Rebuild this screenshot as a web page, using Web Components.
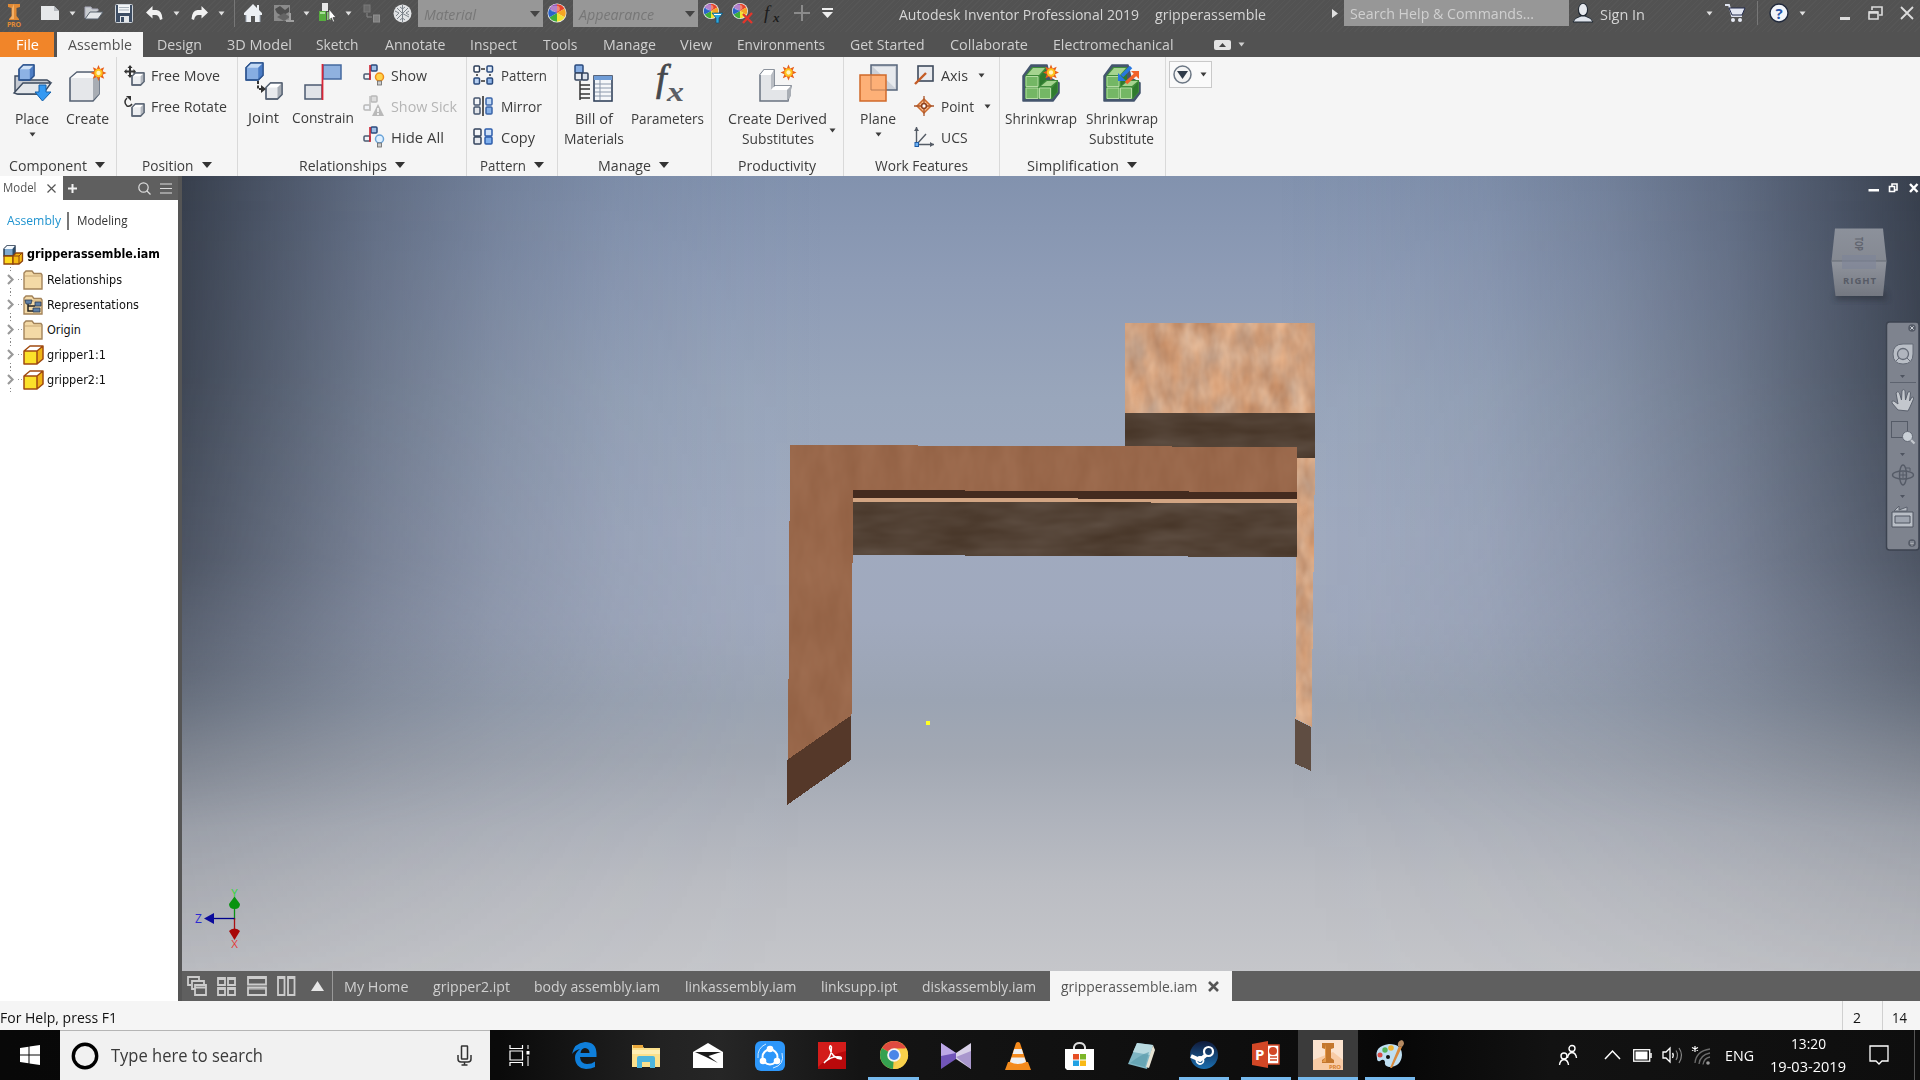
<!DOCTYPE html>
<html lang="en"><head><meta charset="utf-8"><title>Autodesk Inventor Professional 2019</title>
<style>html,body{margin:0;height:100%;overflow:hidden}body{font-family:"Open Sans","Noto Sans",sans-serif;font-size:15px}</style></head>
<body><inventor-desktop></inventor-desktop>
<script>
/* ---------- icon library: each entry is [width, height, markup] ---------- */
const cube=(x,y,s,f,t,r,k)=>`<path d="M${x} ${y+s*.28}L${x+s*.28} ${y}H${x+s}V${y+s*.72}L${x+s*.72} ${y+s}H${x}Z" fill="${f}" stroke="${k}" stroke-width="1.3" stroke-linejoin="round"/><path d="M${x} ${y+s*.28}L${x+s*.28} ${y}H${x+s}L${x+s*.72} ${y+s*.28}Z" fill="${t}"/><path d="M${x+s*.72} ${y+s*.28}L${x+s} ${y}V${y+s*.72}L${x+s*.72} ${y+s}Z" fill="${r}"/><path d="M${x} ${y+s*.28}L${x+s*.28} ${y}H${x+s}V${y+s*.72}L${x+s*.72} ${y+s}H${x}Z" fill="none" stroke="${k}" stroke-width="1.3" stroke-linejoin="round"/>`;
const spark=(x,y,r=7)=>{let p='';for(let i=0;i<16;i++){const a=i*Math.PI/8,q=i%2?r*.55:r;p+=(i?'L':'M')+(x+q*Math.cos(a)).toFixed(1)+' '+(y+q*Math.sin(a)).toFixed(1)}return `<path d="${p}Z" fill="#e8601a"/><circle cx="${x}" cy="${y}" r="${r*.52}" fill="#ffc21c"/><circle cx="${x}" cy="${y}" r="${r*.27}" fill="#fff6c0"/>`};
const ball=(x,y,r)=>{const c=['#e8452a','#f5a623','#f2e335','#3fae3a','#2b63c9','#8a3fb0'];let s=`<circle cx="${x}" cy="${y}" r="${r}" fill="#eee"/>`;for(let i=0;i<6;i++){const a=(i*60-90)*Math.PI/180,b=a+Math.PI/3;s+=`<path d="M${x} ${y}L${x+(r-.8)*Math.cos(a)} ${y+(r-.8)*Math.sin(a)}A${r-.8} ${r-.8} 0 0 1 ${x+(r-.8)*Math.cos(b)} ${y+(r-.8)*Math.sin(b)}Z" fill="${c[i]}"/>`}return s+`<ellipse cx="${x-r*.2}" cy="${y-r*.45}" rx="${r*.5}" ry="${r*.35}" fill="#fff" opacity=".35"/>`};
const sq=(x,y,w,h,f,k='#2a4a7c')=>`<rect x="${x}" y="${y}" width="${w}" height="${h}" rx="1" fill="${f}" stroke="${k}" stroke-width="1.5"/>`;
const relation=(f,k,l)=>`${sq(8,1,6,6,f,k)}${sq(1,10,6,5,'#f2f4f8',l)}<path d="M7 1V16" stroke="${k=='#b8b8b8'?'#c2c2c2':'#cf2233'}" stroke-width="1.6"/>`;
const shrink=`<path d="M1 12L9 1H25L28 14L37 19V29L31 37H1Z" fill="#44566e" stroke="#44566e" stroke-width="1.5" stroke-linejoin="round"/><path d="M3 12L10 3H24V16H36V28L30 35H3Z" fill="#3f8c3a"/><path d="M4 12.5H16V22.500H4ZM4 24H16V34.500H4ZM17.500 24H28.500V34.500H17.500Z" fill="#74b765" stroke="#b5dda3" stroke-width="1"/><path d="M5 11L11 4H23L17 11Z" fill="#a5d48f"/><path d="M18 12L24 5V16L18 22Z" fill="#2f7a2e"/><path d="M19 22L25 17H35L29 22Z" fill="#a5d48f"/><path d="M30 24L35 18V28L30 34Z" fill="#2f7a2e"/>`;
const folder='<path d="M1 5V3L3 1H9L11 3.5H18L19 5V19H1Z" fill="#f3d9a6" stroke="#a3835a" stroke-width="1.4"/><path d="M2 6H18" stroke="#c9a877" stroke-width="1"/>';
const part='<path d="M1 6L7 1H20L14 6V19H1Z" fill="#fbe12a"/><path d="M1 6L7 1H20L14 6Z" fill="#fff"/><path d="M14 6L20 1V14L14 19Z" fill="#f0b414"/><path d="M1 6L7 1H20V14L14 19H1ZM1 6H14M14 6V19M14 6L20 1" fill="none" stroke="#a04a10" stroke-width="1.5" stroke-linejoin="round"/>';
const I={
logo:[20,26,'<path d="M4 2H16V5L12.5 6V14L15 17V18H5V17L7.5 14V6L4 5Z" fill="#e08a35"/><path d="M8 6V14L6 17H10V2Z" fill="#f4b066"/><text x="10" y="25" font-size="7" font-weight="700" text-anchor="middle" textLength="14" fill="#e08a35" font-family="Open Sans,sans-serif">PRO</text>'],
newdoc:[20,16,'<path d="M1 1H14L19 6V15H1Z" fill="#e6e8ea"/><path d="M14 1V6H19Z" fill="#b6babf"/>'],
open:[20,14,'<path d="M1 12V1H7L8 3H14V5" fill="#c9cdd1" stroke="#aab" /><path d="M1 13L6 6H19L14 13Z" fill="#e3e6e9" stroke="#59636e"/>'],
save:[18,19,'<rect x=".5" y=".5" width="17" height="18" rx="1" fill="#3d4d63" stroke="#cfd4da"/><rect x="3" y="1" width="12" height="8" fill="#f2f4f6"/><path d="M4 3.5H14M4 6H14" stroke="#a9b2bb"/><rect x="5" y="12" width="9" height="6" fill="#e4e7ea"/><rect x="6" y="13" width="3" height="5" fill="#3d4d63"/>'],
undo:[17,14,'<path d="M6.500 0V4H10.500Q16 4.500 16.500 13L14 14Q13 9 9.500 9H6.500V12.500L0 6.500Z" fill="#f1f1f1"/>'],
redo:[17,14,'<path d="M10.500 0V4H6.500Q1 4.500 .5 13L3 14Q4 9 7.500 9H10.500V12.500L17 6.500Z" fill="#f1f1f1"/>'],
down:[7,5,'<path d="M.5 .5H6.5L3.5 4.5Z" fill="currentColor"/>'],
fdown:[10,6,'<path d="M0 0H10L5 6Z" fill="currentColor"/>'],
bigdown:[10,6,'<path d="M0 0H10L5 6Z" fill="currentColor"/>'],
right:[6,9,'<path d="M0 0L6 4.5L0 9Z" fill="#e0e0e0"/>'],
home:[18,18,'<path d="M9 0L0 9V11H2V18H7V12H11V18H16V11H18V9L15 6V1H13V4Z" fill="#eceff3"/><path d="M2 11V18M16 11V18" stroke="#9aa5b3"/>'],
update:[21,18,'<path d="M1 1H17V17H1Z" fill="#8a8a8a"/><path d="M2 5L7 2L12 6L16 3V8L9 12L4 9Z" fill="#4e4e4e"/><path d="M4 13L11 9L17 13L11 17Z" fill="#646464"/><path d="M17 9V16M13 17H21" stroke="#a0a0a0" stroke-width="2"/>'],
select:[18,20,'<path d="M4 0H10V8H4Z" fill="#e8e8e8"/><path d="M1 8H8V18H1Z" fill="#57ad3f"/><path d="M2 9H7V11H2Z" fill="#a9dd9a"/><path d="M9 9H13V17H9Z" fill="#8ac878"/><path d="M11 6V17L13.500 15L15 19L16.500 18.500L15 14.500H18Z" fill="#fff" stroke="#333" stroke-width=".6"/>'],
links:[18,20,'<rect x="1" y="2" width="6" height="7" fill="#6a6a6a" stroke="#7b7b7b"/><rect x="10.500" y="12" width="6" height="7" fill="#808080" stroke="#8f8f8f"/><path d="M4 10V14H9" fill="none" stroke="#888"/>'],
sphere:[19,19,'<circle cx="9.5" cy="9.5" r="9" fill="#e2e4e6"/><path d="M9.500 9.500L4 4M9.500 9.500L15 4M9.500 9.500L16 13M9.500 9.500L4 15M9.500 1V18M2 7L6 9L3 12M16 7L13 9L16 11M7 3L9.500 5L12 3M7 16L9.500 14L12 16" fill="none" stroke="#7d848b" stroke-width="1"/>'],
wheel:[20,20,ball(10,10,9.5)],
wheelf:[20,20,ball(8,8,8)+'<path d="M9 10H20L16 15V20H13V15Z" fill="#2ba8e0" stroke="#174a6a" stroke-width=".7"/><path d="M11 11.5H18" stroke="#fff"/>'],
wheelx:[22,20,ball(8,8,8)+'<path d="M11 11L20 20M20 10L11 20" stroke="#e3362c" stroke-width="2.400"/>'],
fxs:[18,19,'<text x="0" y="15" font-family="Liberation Serif,serif" font-style="italic" font-size="19" fill="#1c1c1c">f</text><text x="9" y="18" font-family="Liberation Serif,serif" font-style="italic" font-weight="700" font-size="13" fill="#1c1c1c">x</text>'],
plus:[18,18,'<path d="M9 1V17M1 9H17" stroke="#8b8b8b" stroke-width="2"/>'],
more:[11,10,'<path d="M0 1H11" stroke="#eee" stroke-width="2"/><path d="M0 4H11L5.5 10Z" fill="#eee"/>'],
user:[20,20,'<ellipse cx="10" cy="7" rx="5" ry="7" fill="#1f2833"/><ellipse cx="10" cy="6.5" rx="4" ry="5.8" fill="#e6e9ee"/><path d="M0 19Q1 15 8 13H12Q19 15 20 19Z" fill="#dfe4ec" stroke="#1f2833"/>'],
cart:[20,18,'<path d="M0 1H4L7 12H17" fill="none" stroke="#dfe3ee" stroke-width="1.8"/><path d="M4 4H20L17 11H7Z" fill="#e3e7f2" stroke="#232b4d"/><circle cx="8" cy="16" r="2" fill="#e8ebf5"/><circle cx="15" cy="16" r="2" fill="#e8ebf5"/>'],
help:[20,20,'<circle cx="10" cy="10" r="9" fill="#f2f5fa" stroke="#20293c" stroke-width="1.4"/><text x="10" y="15.5" text-anchor="middle" font-family="Open Sans,sans-serif" font-weight="700" font-size="15" fill="#2a56a8">?</text>'],
min:[10,3,'<path d="M0 0H10V3H0Z" fill="#dcdcdc"/>'],
restore:[15,14,'<path d="M4 4V1H14V9H11" fill="none" stroke="#dcdcdc" stroke-width="1.6"/><path d="M1 6H10V13H1Z" fill="none" stroke="#dcdcdc" stroke-width="1.6"/><path d="M1 6.5H10" stroke="#dcdcdc" stroke-width="2.5"/>'],
close:[14,14,'<path d="M1 1L13 13M13 1L1 13" stroke="#dcdcdc" stroke-width="1.800"/>'],
tabbox:[17,10,'<rect width="17" height="10" rx="2" fill="#e4e4e4"/><path d="M5 7L8.5 3L12 7Z" fill="#444"/>'],
place:[39,38,'<path d="M2 12H7L9 16H34L37 18L30 30H5L2 27Z" fill="#c5cad2" stroke="#3d4b5f" stroke-width="1.400"/><path d="M1 29L10 19H38L30 30H4Z" fill="#e3e6ea" stroke="#3d4b5f" stroke-width="1.400"/>'+cube(6,1,15,'#8db2e4','#cfe1f6','#4d7dc4','#2e5590')+'<path d="M26 21H33V28H38L29.500 37L22 28H26Z" fill="#3399f3" stroke="#1461a9"/>'],
create:[39,38,'<path d="M2 14L9 8H31V30L25 37H2Z" fill="#e5e7ea" stroke="#566273" stroke-width="1.600"/><path d="M3 14L9 9H30L25 14Z" fill="#fafafa"/><path d="M25 14L31 9V30L25 36Z" fill="#a8adb4"/>'+spark(30.5,9,8)],
fmove:[20,21,cube(8,8,12,'#eceef1','#fff','#b3b8bf','#5b6675')+'<path d="M6 0L8.500 3H7V5.500H9.500V4L12 6.500L9.500 9V7.500H7V10H8.500L6 13L3.500 10H5V7.500H2.500V9L0 6.500L2.500 4V5.500H5V3H3.500Z" fill="#333"/>'],
frot:[20,21,cube(8,8,12,'#eceef1','#fff','#b3b8bf','#5b6675')+'<path d="M3 2Q-1 6 3 10Q6 11 8 8" fill="none" stroke="#333" stroke-width="1.500"/><path d="M2 0H7V5Z" fill="#333"/>'],
joint:[38,39,cube(1,1,17,'#86ade2','#c3daf5','#4a7cc5','#2e5590')+cube(21,21,16,'#e8eaed','#fff','#a7adb5','#566273')+'<path d="M13 19V27H17" fill="none" stroke="#333" stroke-width="2" stroke-dasharray="3 1.500"/><path d="M16 23L21 27L16 31Z" fill="#333"/>'],
constrain:[38,37,'<rect x="19" y="1" width="18" height="14" fill="#8fb1df" stroke="#44699f" stroke-width="1.500"/><rect x="1" y="21" width="17" height="14" fill="#e0e3e8" stroke="#4b5a70" stroke-width="1.500"/><path d="M18.500 0V36" stroke="#d92637" stroke-width="1.800"/>'],
show:[21,22,relation('#9fbfe6','#2a4a7c','#4b5a70')+'<circle cx="16.500" cy="13" r="4" fill="#ffd34a" stroke="#ee8c1a" stroke-width="1.500"/><rect x="14.500" y="17" width="4" height="4" fill="#ccc" stroke="#666" stroke-width=".8"/>'],
sick:[21,22,relation('#ddd','#b8b8b8','#b8b8b8')+'<path d="M15 9L21 21H9Z" fill="#b9b9b9"/><path d="M15 13V17M15 18V20" stroke="#fff" stroke-width="1.500"/>'],
hide:[21,22,relation('#9fbfe6','#2a4a7c','#4b5a70')+'<circle cx="16.500" cy="13" r="4" fill="#dff0ff" stroke="#6aa3d8" stroke-width="1.500"/><rect x="14.500" y="17" width="4" height="4" fill="#ccc" stroke="#666" stroke-width=".8"/>'],
pattern:[21,20,sq(1,1,5.5,6,'#fff','#2b3c57')+sq(14,1,5.5,6,'#dbe8f9')+sq(1,13,5.5,6,'#b8d1f2')+sq(14,13,5.5,6,'#8fb5e8')+'<path d="M8 4H12M4 9V11M8 16H12M17 9V11" stroke="#333" stroke-width="1.500"/>'],
mirror:[21,20,sq(1,2,6,7,'#f4f6f9','#44546e')+sq(1,11,6,7,'#e2e5ea','#44546e')+sq(13,2,6,7,'#c0d8f5','#3a64a8')+sq(13,11,6,7,'#86b0e6','#3a64a8')+'<path d="M10 0V20" stroke="#222" stroke-width="1.500"/>'],
copy:[21,18,sq(1,1,7,7,'#f4f6f9','#33435c')+sq(1,9,7,7,'#e6e9ee','#33435c')+sq(12,1,7,7,'#cfe1f8','#2d5cab')+sq(12,9,7,7,'#7fb0ee','#2d5cab')],
bom:[39,38,sq(1,1,8,8,'#86ade2')+sq(1,9,7,7,'#e8ebf0','#33435c')+sq(8,9,6,7,'#dce3ec','#33435c')+'<path d="M6 17V36M6 21H16M6 25H16M6 30H16M6 34H16" stroke="#333" stroke-width="1.500"/><rect x="20" y="12" width="18" height="25" fill="#f5f7fa" stroke="#33435c" stroke-width="1.600"/><path d="M20 12H38V16H20Z" fill="#6f9cd6"/><path d="M26 16V36M21 20H37M21 24H37M21 28H37M21 32H37" stroke="#8b98ab"/>'],
fx:[34,38,'<text x="5" y="27" font-family="Liberation Serif,serif" font-style="italic" font-size="38" fill="#45484d" stroke="#45484d" stroke-width=".7">f</text><text x="16" y="37" font-family="Liberation Serif,serif" font-style="italic" font-weight="700" font-size="27" textLength="17" lengthAdjust="spacingAndGlyphs" fill="#5b5f66">x</text>'],
derived:[39,38,'<path d="M2 11L6 6H16V22H33L30 37H2Z" fill="#e3e5e8" stroke="#6a7380" stroke-width="1.500"/><path d="M2 11L6 6H16L13 11Z" fill="#fff"/><path d="M13 11L16 6V22L13 26Z" fill="#b9bdc3"/><path d="M13 26L17 22H33L29 26Z" fill="#fff"/><path d="M29 26L33 22V32L29 37Z" fill="#a9aeb5"/>'+spark(30.5,8.5,8)],
plane:[39,38,'<rect x="12" y="1" width="26" height="25" fill="#cbd0d8" stroke="#56647a" stroke-width="1.500"/><path d="M14 3H36V24Z" fill="#e6e9ed"/><rect x="1" y="11" width="26" height="26" fill="#fdb077" stroke="#d0692a" stroke-width="1.500"/><path d="M12 11V26H27" fill="none" stroke="#b87b55"/>'],
axis:[20,20,'<rect x="4" y="1" width="15" height="15" fill="#e9ebef" stroke="#3e4a5c" stroke-width="1.600"/><path d="M1 19L12 8" stroke="#c45c26" stroke-width="2.400"/>'],
point:[20,20,'<path d="M10 3L17 10L10 17L3 10Z" fill="#fcc08f" stroke="#cc6a2c" stroke-width="1.500"/><path d="M10 0V7M10 13V20M0 10H7M13 10H20" stroke="#a8542a" stroke-width="1.300"/><circle cx="10" cy="10" r="2.400" fill="#fff" stroke="#8d3f1b" stroke-width="1.500"/>'],
ucs:[20,20,'<path d="M2.500 0V17.500H20M3 17L12 7" fill="none" stroke="#555c66" stroke-width="1.400"/><path d="M0 4L2.500 0L5 4ZM16 15L20 17.500L16 20Z" fill="#555c66"/><rect x="1" y="15.500" width="3.500" height="4" fill="#6cb2f5" stroke="#1e5ca5"/>'],
shrink:[38,38,shrink+spark(29,8.5,8)],
subst:[38,38,shrink+'<path d="M28 3L19 12" stroke="#2878e0" stroke-width="3.500"/><path d="M15 9V17H23Z" fill="#2878e0"/><path d="M23 19L33 10" stroke="#f2622a" stroke-width="3.500"/><path d="M28 7H36V15Z" fill="#f2622a"/>'],
ribmenu:[19,19,'<circle cx="9.500" cy="9.500" r="8.500" fill="#f4f4f4" stroke="#6b7683" stroke-width="1.500"/><path d="M4 6H15L9.500 14Z" fill="#2f3a48"/>'],
x:[9,9,'<path d="M.5 .5L8.500 8.500M8.500 .5L.5 8.500" stroke="#555" stroke-width="1.200"/>'],
add:[9,9,'<path d="M4.500 0V9M0 4.500H9" stroke="#f2f2f2" stroke-width="2"/>'],
search:[13,13,'<circle cx="5.500" cy="5.500" r="4.700" fill="none" stroke="#ddd" stroke-width="1.200"/><path d="M9 9L12.500 12.500" stroke="#ddd" stroke-width="1.300"/>'],
menu:[12,11,'<path d="M0 1H12M0 5.500H12M0 10H12" stroke="#ddd" stroke-width="1.200"/>'],
asm:[20,20,'<path d="M1 4L4 1H12V9L10 11H1Z" fill="#7fa9cf" stroke="#1d2f45" stroke-width="1.400"/><path d="M1 4L4 1H12L9.500 4Z" fill="#f5faff"/><path d="M9.500 4L12 1V9L9.500 11Z" fill="#2d4a68"/><path d="M1 11H10V19H1Z" fill="#ffd91e" stroke="#8f430d" stroke-width="1.300"/><path d="M10 11L13 8H19.500V16L16 19H10Z" fill="#f5b913" stroke="#8f430d" stroke-width="1.300"/><path d="M10 11H16V19M16 11L19 8" fill="none" stroke="#8f430d"/>'],
folder:[20,20,folder],
reps:[20,20,folder+'<path d="M5 8V16H10M5 11H12" fill="none" stroke="#222" stroke-width="1.500"/><path d="M2 5H9L8 9H3ZM12 7H18V11H12ZM10 13H17V17H10Z" fill="#5e7fa5" stroke="#2b3b50" stroke-width=".8"/>'],
part:[20,20,part],
chev:[7,11,'<path d="M1 1L5.500 5.500L1 10" fill="none" stroke="#999" stroke-width="2.200"/>'],
cascade:[20,20,'<path d="M12 4V1H1V9H4M17 8V5H5V13H8M8 9H19V19H8ZM8 11.500H19" fill="none" stroke="#ccc" stroke-width="1.800"/>'],
grid:[19,19,'<path d="M1 1H8V8H1ZM11 1H18V8H11ZM1 11H8V18H1ZM11 11H18V18H11Z" fill="none" stroke="#ccc" stroke-width="1.800"/><path d="M1 2.500H8M11 2.500H18M1 12.500H8M11 12.500H18" stroke="#ccc"/>'],
rows:[20,20,'<path d="M1 1H19V8.500H1ZM1 11.500H19V19H1Z" fill="none" stroke="#ccc" stroke-width="1.800"/><path d="M1 2.500H19M1 13H19" stroke="#ccc"/>'],
cols:[19,20,'<path d="M1 1H7.500V19H1ZM11 1H17.500V19H11Z" fill="none" stroke="#ccc" stroke-width="1.800"/><path d="M1 2.500H8M11 2.500H18" stroke="#ccc"/>'],
up:[13,10,'<path d="M0 10L6.500 0L13 10Z" fill="#e6e6e6"/>'],
docx:[11,11,'<path d="M1 1L10 10M10 1L1 10" stroke="#555" stroke-width="2.600"/>'],
win:[20,20,'<path d="M0 3L8.500 1.800V9.500H0ZM9.500 1.600L20 0V9.500H9.500ZM0 10.500H8.500V18.200L0 17ZM9.500 10.500H20V20L9.500 18.400Z" fill="#fff"/>'],
cortana:[28,28,'<circle cx="14" cy="14" r="11.700" fill="none" stroke="#000" stroke-width="3.400"/>'],
mic:[15,21,'<rect x="4.500" y="1" width="6" height="13" rx=".5" fill="none" stroke="#333" stroke-width="1.500"/><path d="M1 10V14Q1 17 4 17H11Q14 17 14 14V10M7.500 17V20M4.500 20H10.500" fill="none" stroke="#333" stroke-width="1.500"/>'],
taskview:[21,21,'<path d="M1 0V3.500H13.500V0M1 21V17.500H13.500V21M1 6H13.500V15H1Z" fill="none" stroke="#fff" stroke-width="1.200"/><path d="M19 0V4M19 11V21" stroke="#fff" stroke-width="1"/><path d="M17.500 6H20.500V9.500H17.500Z" fill="#fff"/>'],
edge:[25,27,'<path d="M0 12Q2 1 13 0Q24 0 24.500 11V15H8Q8.500 22 15 22Q20 22 23 19.500V25Q19 27 14 27Q3 26 3 15Q3 11 8 7Q3 8 0 12ZM8.500 11H17.500Q17.500 6.500 13 6Q9 6.500 8.500 11Z" fill="#0f7fdb" fill-rule="evenodd"/>'],
explorer:[28,24,'<path d="M0 1H10L12 4H28V23H0Z" fill="#fbe08c"/><path d="M1 1H11V4H1Z" fill="#e9a83c"/><path d="M0 6H28V10H0Z" fill="#fdeeb4"/><path d="M5 24V14Q5 12 7 12H21Q23 12 23 14V24H18V18H10V24Z" fill="#4db5dc"/>'],
mail:[30,25,'<path d="M0 9L15 0L30 9V25H0Z" fill="#fff"/><path d="M2 9H28L15.500 13L25 20L12 13.500Z" fill="#1a1a1a"/>'],
share:[30,30,'<rect width="30" height="30" rx="6" fill="#2d97fa"/><circle cx="15" cy="16" r="7.500" fill="none" stroke="#fff" stroke-width="2"/><g fill="#fff"><circle cx="15" cy="8" r="3.300"/><circle cx="8" cy="20" r="3.300"/><circle cx="22" cy="20" r="3.300"/></g><path d="M3 17Q2 7 11 3M27 12Q30 24 18 27" fill="none" stroke="#cfe8ff"/>'],
pdf:[28,27,'<rect width="28" height="27" fill="#b9090b"/><path d="M0 0H28V9Q12 12 0 25Z" fill="#d31c1a"/><path d="M6 21Q14 15 13.500 5Q12 2 11.500 6Q14 16 23 17Q25 14 16 15Q9 17 6 21Z" fill="none" stroke="#fff" stroke-width="1.400"/>'],
chrome:[28,28,'<circle cx="14" cy="14" r="14" fill="#f6c945"/><path d="M14 14L1.900 7A14 14 0 0 1 26.100 7Z" fill="#e04a3f"/><path d="M14 14L1.900 7A14 14 0 0 0 13 28Z" fill="#35a150"/><path d="M14 7.500H26.400A14 14 0 0 1 13 28L20 17.500Z" fill="#f9d14b"/><circle cx="14" cy="14" r="6.800" fill="#f4f4f4"/><circle cx="14" cy="14" r="5" fill="#4b86e8"/>'],
kmp:[30,26,'<path d="M0 0L15 10V16L0 26Z" fill="#7155b8"/><path d="M0 0L15 10L0 13Z" fill="#bda8e6"/><path d="M30 0L15 10V16L30 26Z" fill="#d9d1e8"/><path d="M30 8L15 14L30 26Z" fill="#a997cd"/>'],
vlc:[26,28,'<path d="M3 20H23L26 28H0Z" fill="#f28a1c"/><path d="M11 1Q13-1 15 1L22 22Q13 27 4 22Z" fill="#f58a1c"/><path d="M9.200 7H16.800L18.300 12H7.700ZM6.500 15.500H19.500L21 20Q13 24 5 20Z" fill="#eef0f2"/>'],
store:[29,28,'<path d="M9 10V5Q10 1 14.500 1Q19 1 20 5V10" fill="none" stroke="#ddd" stroke-width="2"/><path d="M0 7H29V28H2L0 26Z" fill="#fff"/><path d="M8 12H14V17.500H8Z" fill="#e74f25"/><path d="M15 12H21V17.500H15Z" fill="#7cb629"/><path d="M8 18.500H14V24H8Z" fill="#22a2e4"/><path d="M15 18.500H21V24H15Z" fill="#f9b916"/>'],
note:[27,27,'<path d="M9 1L25 3L19 27L0 22Z" fill="#7fb6c4"/><path d="M9 1L25 3L22 13L5 10Z" fill="#b9dae0"/><path d="M25 3L27 8L21 26L18 25Z" fill="#e6e2d3"/><path d="M2 21Q12 13 21 10L17 25Z" fill="#5d9eae" opacity=".7"/>'],
steam:[28,28,'<defs><linearGradient id="g" x2="0" y2="1"><stop stop-color="#101a3a"/><stop offset="1" stop-color="#1b6fb0"/></linearGradient></defs><circle cx="14" cy="14" r="14" fill="url(#g)"/><circle cx="18.500" cy="10.500" r="4.500" fill="none" stroke="#fff" stroke-width="2.200"/><path d="M1 15L10 19L16 14" fill="none" stroke="#fff" stroke-width="4"/><circle cx="10" cy="19.500" r="3.500" fill="none" stroke="#fff" stroke-width="1.800"/>'],
ppt:[28,27,'<path d="M13 4H27V23H13Z" fill="#fff" stroke="#d24726" stroke-width="1.500"/><path d="M0 3L16 0V27L0 24Z" fill="#d24726"/><path d="M18 16H25M18 19H25" stroke="#d24726" stroke-width="1.500"/><circle cx="21" cy="10" r="4" fill="#d24726"/><text x="3" y="19" font-family="Open Sans,sans-serif" font-weight="700" font-size="15" fill="#fff">P</text>'],
inv:[30,30,'<rect width="30" height="30" fill="#fbe3cf"/><path d="M0 20L20 12L30 20V30H0Z" fill="#f8cba5"/><path d="M9 3H21V8L18 9V18L21 20V23H9V20L12 18V9L9 8Z" fill="#c4772d"/><path d="M13 4V22H9L12 18V9Z" fill="#e59a4c"/><text x="16" y="28.500" textLength="12" font-size="6" font-weight="700" font-family="Open Sans,sans-serif" fill="#d9812f">PRO</text>'],
paint:[30,29,'<path d="M2 18Q-1 6 14 4Q27 4 27 15Q26 27 14 27Q9 26 10 22Q9 18 5 21Q2 22 2 18Z" fill="#bfdff2"/><circle cx="5" cy="15" r="2.500" fill="#d94b45"/><circle cx="10" cy="10" r="2.700" fill="#56b35a"/><circle cx="16" cy="8" r="2.800" fill="#f0b432"/><circle cx="13" cy="17" r="2" fill="#111"/><path d="M15 28L24 6L27 7L17 28Z" fill="#d98a3d"/><path d="M23 6Q22 1 27 0Q31 3 27 7Z" fill="#b58a62"/>'],
people:[18,20,'<circle cx="13" cy="3.500" r="3" fill="none" stroke="#fff" stroke-width="1.400"/><path d="M8.500 13Q9 8 13 7.500Q17 8 17.500 13" fill="none" stroke="#fff" stroke-width="1.400"/><circle cx="5" cy="11" r="3" fill="none" stroke="#fff" stroke-width="1.400"/><path d="M.5 20Q1 15 5 14.500Q9 15 9.500 20" fill="none" stroke="#fff" stroke-width="1.400"/>'],
caret:[17,10,'<path d="M1 9L8.500 1L16 9" fill="none" stroke="#fff" stroke-width="1.500"/>'],
battery:[19,13,'<rect x=".7" y=".7" width="16" height="11.500" fill="none" stroke="#fff" stroke-width="1.300"/><rect x="2.500" y="2.500" width="12" height="8" fill="#fff"/><path d="M18 4V9" stroke="#fff" stroke-width="1.500"/>'],
vol:[21,17,'<path d="M1 5H4L8 1V15L4 11H1Z" fill="none" stroke="#fff" stroke-width="1.300"/><path d="M10.500 6Q12 8 10.500 11" fill="none" stroke="#fff" stroke-width="1.300"/><path d="M14 3.500Q17 8 14 13M17 1Q22 8 17 16" fill="none" stroke="#888" stroke-width="1.200"/>'],
wifi:[19,19,'<path d="M3 0V6M0 1.500L6 4.500M6 1.500L0 4.500" stroke="#fff" stroke-width="1.200"/><path d="M3 17Q4 5 18 3M7 18Q8 9 18 7M11 18.500Q12 12 18 11" fill="none" stroke="#6c6c6c" stroke-width="1.300"/><circle cx="16" cy="17" r="1.800" fill="#999"/>'],
action:[20,21,'<path d="M1 1H19V16H13L10 19L7 16H1Z" fill="none" stroke="#fff" stroke-width="1.300"/>']
};
/* ---------- helpers ---------- */
const ic=n=>`<ui-icon name="${n}"></ui-icon>`;
const tx=(s,w,st='')=>`<fit-label w="${w}" style="${st}">${s}</fit-label>`;
/* Flow row: each item is [left edge, width, markup, style]; the gap to the previous item becomes its margin. */
const row=(o,items)=>{let p=o;return items.map(([x,w,h,s=''])=>{const m=x-p;p=x+w;return `<div class="i" style="margin-left:${m.toFixed(2)}px;width:${w}px;${s}">${h}</div>`}).join('')};
const T=(x,e,s,st='')=>[x,e-x,tx(s,e-x),st];
const N=(x,n,st='')=>[x,I[n][0],ic(n),st];
const rowCss='.row{display:flex;align-items:center}.i{flex:none}';
const def=(name,css,html)=>customElements.define(name,class extends HTMLElement{connectedCallback(){if(this.shadowRoot)return;this.attachShadow({mode:'open'}).innerHTML=`<style>:host{display:block;box-sizing:border-box}${rowCss}${css}</style>${typeof html=='function'?html(this):html}`}});

customElements.define('fit-label',class extends HTMLElement{connectedCallback(){if(this.shadowRoot)return;const w=+this.getAttribute('w');
this.attachShadow({mode:'open'}).innerHTML=`<style>:host{display:block;width:${w}px;line-height:20px;white-space:nowrap}span{display:inline-block;transform-origin:0 50%}</style><span><slot></slot></span>`;
const s=this.shadowRoot.querySelector('span');const n=s.getBoundingClientRect().width;if(n)s.style.transform=`scaleX(${w/n})`}});
customElements.define('ui-icon',class extends HTMLElement{connectedCallback(){if(this.shadowRoot)return;const[w,h,b]=I[this.getAttribute('name')];
this.attachShadow({mode:'open'}).innerHTML=`<style>:host{display:block;width:${w}px;height:${h}px}svg{display:block;overflow:visible}</style><svg width="${w}" height="${h}" viewBox="0 0 ${w} ${h}">${b}</svg>`}});

def('title-bar',`:host{height:32px;background:repeating-linear-gradient(135deg,rgba(255,255,255,.025) 0 1px,transparent 1px 4px),#525252;color:#d6d6d6}.row{height:26px}.field{background:#979797;height:27px;box-sizing:border-box;padding:1px 3px 0 6px;display:flex;align-items:center;justify-content:space-between;color:#777}.field fit-label{font-style:italic}.i ui-icon{color:#e0e0e0}.i .field ui-icon{color:#444}`,
`<div class="row">${row(0,[N(4,'logo','padding-top:4px'),N(39.5,'newdoc'),N(68.5,'down'),N(84,'open'),N(115,'save'),N(146,'undo'),N(172.5,'down'),N(191,'redo'),N(217.5,'down'),[234,1,'<div style="height:27px;background:#777"></div>'],N(244,'home'),N(273,'update'),N(302.5,'down'),N(318,'select'),N(344.5,'down'),N(363,'links'),N(392.5,'sphere'),
[418,125,`<div class="field">${tx('Material',52)}${ic('fdown')}</div>`],N(546.5,'wheel'),[573,125,`<div class="field">${tx('Appearance',75)}${ic('fdown')}</div>`],N(703,'wheelf'),N(732,'wheelx'),N(764,'fxs'),N(793,'plus'),N(821.5,'more'),
T(899,1139,'Autodesk Inventor Professional 2019','padding-top:2px'),T(1155,1266,'gripperassemble','padding-top:2px'),N(1332,'right'),
[1344,225,`<div class="field" style="height:26px;color:#d0d0d0;padding-bottom:1px;padding-top:0"><fit-label w="184" style="font-style:normal">Search Help &amp; Commands...</fit-label></div>`],N(1573,'user'),T(1600,1645,'Sign In','padding-top:1px'),N(1705.5,'down'),N(1725,'cart'),[1757,1,'<div style="height:24px;background:#777"></div>'],N(1769,'help'),N(1798.5,'down'),N(1840,'min','padding-top:11px'),N(1868,'restore'),N(1900,'close')])}</div>`);

def('ribbon-tabs',`:host{height:25px;background:#525252;color:#cfcfcf}.row{height:25px;align-items:stretch}.i{display:flex;align-items:center}.i fit-label{padding-bottom:1.500px}.file{background:#f18529;width:54px;height:25px;color:#fff}.act{background:#f5f5f5;height:25px;width:86px;color:#505050}.c{display:flex;align-items:center;justify-content:center}`,
`<div class="row">${row(0,[[0,54,`<div class="file c">${tx('File',23)}</div>`],[57,86,`<div class="act c">${tx('Assemble',64)}</div>`],T(157,202,'Design'),T(226.5,291.5,'3D Model'),T(316,358.5,'Sketch'),T(384.5,445,'Annotate'),T(470,517,'Inspect'),T(542.5,577,'Tools'),T(602.5,655.5,'Manage'),T(680,712,'View'),T(737,825,'Environments'),T(850,924.5,'Get Started'),T(950,1028,'Collaborate'),T(1052.5,1173,'Electromechanical'),N(1214,'tabbox'),N(1237.5,'down')])}</div>`);

def('big-button',`.col{display:flex;flex-direction:column;align-items:center}ui-icon{margin-bottom:6px}ui-icon.d{margin:4px 0 0}`,
h=>{const L=h.getAttribute('lines').split('|').map(v=>v.split('~'));return `<div class="col">${ic(h.getAttribute('icon'))}${L.map(l=>tx(l[0],+l[1])).join('')}${h.hasAttribute('menu')?'<ui-icon class="d" name="down"></ui-icon>':''}</div>`});
def('small-button',`.row{height:31px}.row ui-icon{margin-right:7px}.row ui-icon.d{margin:0 0 0 10px}`,
h=>`<div class="row">${ic(h.getAttribute('icon'))}${tx(h.getAttribute('text'),+h.getAttribute('w'))}${h.hasAttribute('menu')?'<ui-icon class="d" name="down"></ui-icon>':''}</div>`);
const big=(x,w,i,l,m='',pt=7)=>[x,w,`<big-button icon="${i}" lines="${l}" ${m}></big-button>`,`padding-top:${pt}px`];
const small=(x,w,a)=>[x,w,a.map(([i,t,tw,m='',s=''])=>`<small-button icon="${i}" text="${t}" w="${tw}" ${m} style="${s}"></small-button>`).join(''),'padding-top:2.500px'];
def('ribbon-panel',`:host{flex:none;border-right:1px solid #d9d9d9;display:flex;flex-direction:column;height:119px;color:#3c3c3c}.body{display:flex;height:98px;align-items:flex-start}.foot{display:flex;align-items:center;height:22px}.foot ui-icon{color:#333;margin-left:8px}.box{box-sizing:border-box;width:43px;height:27px;border:1px solid #c9c9c9;background:#fafafa;display:flex;align-items:center;gap:8px;padding-left:3px}`,
h=>{const p=P[+h.getAttribute('n')];h.style.width=p.e-p.s+'px';return `<div class="body">${row(p.s,p.items)}</div><div class="foot">${p.label?row(p.s,[T(p.label[0],p.label[1],p.label[2])])+(p.label[3]?ic('bigdown'):''):''}</div>`});
const P=[
{s:0,e:117,label:[9,87,'Component',1],items:[big(13,38,'place','Place~34','menu'),big(65.5,43,'create','Create~43')]},
{s:117,e:238,label:[142,193.5,'Position',1],items:[small(124,110,[['fmove','Free Move',69],['frot','Free Rotate',76]])]},
{s:238,e:467,label:[299,387,'Relationships',1],items:[big(243.5,40,'joint','Joint~31','',5),big(292,62,'constrain','Constrain~62')
,small(363,100,[['show','Show',36],['sick','Show Sick',66,'','color:#b5b5b5'],['hide','Hide All',53]])]},
{s:467,e:558,label:[480,526,'Pattern',1],items:[small(473,80,[['pattern','Pattern',46],['mirror','Mirror',41],['copy','Copy',34]])]},
{s:558,e:712,label:[598,651,'Manage',1],items:[big(563.5,60,'bom','Bill of~38|Materials~60'),big(631,73,'fx','Parameters~73')]},
{s:712,e:844,label:[738,816,'Productivity'],items:[big(728,99,'derived','Create Derived~99|Substitutes~72'),[829,7,ic('down'),'padding-top:71px']]},
{s:844,e:1000,label:[875,968,'Work Features'],items:[big(859,38,'plane','Plane~36','menu'),small(914,80,[['axis','Axis',27,'menu'],['point','Point',33,'menu'],['ucs','UCS',26.5]])]},
{s:1000,e:1166,label:[1027,1119,'Simplification',1],items:[big(1005,72,'shrink','Shrinkwrap~72'),big(1085.5,72,'subst','Shrinkwrap~72|Substitute~65')]},
{s:1166,e:1921,items:[[1168.5,43,`<div class="box">${ic('ribmenu')}${ic('down')}</div>`,'padding-top:4px']]}];
def('ribbon-bar',`:host{display:flex;height:119px;background:#f5f5f5;overflow:hidden}`,P.map((_,i)=>`<ribbon-panel n="${i}"></ribbon-panel>`).join(''));

def('tree-item',`.row{height:25px;font:12.5px "DejaVu Sans Condensed","Noto Sans",sans-serif;color:#111}.dots{width:7px;height:1px;background:repeating-linear-gradient(90deg,#999 0 1px,transparent 1px 3px)}.cv{width:18px;display:flex;align-items:center;gap:4px;margin-left:7px;margin-right:-2px;height:25px;background:linear-gradient(#fff,#fff) 0 6px/8px 13px no-repeat,repeating-linear-gradient(#888 0 1px,#fff 1px 3px) 3px 0/1px 25px no-repeat}fit-label{margin-left:4px}`,
h=>`<div class="row"><div class="cv">${ic('chev')}<div class="dots"></div></div>${ic(h.getAttribute('icon'))}${tx(h.getAttribute('text'),+h.getAttribute('w'))}</div>`);
def('browser-panel',`:host{width:182px;height:825px;background:#fff;border-right:4px solid #555;flex:none}.bar{height:24px;background:#5f5f5f}.tab{background:#fff;width:63px;height:24px;display:flex;align-items:center;font-size:12.5px;color:#555}.tab fit-label{margin:0 10px 0 3px}.views{height:42px;font-size:12.5px;color:#333}.views .row,.root{height:42px}.root{height:25px;font:bold 12.5px "DejaVu Sans Condensed","Noto Sans",sans-serif;color:#000}.root fit-label{margin-top:-1px}`,
`<div class="row bar"><div class="tab">${tx('Model',33.5)}${ic('x')}</div>${row(63,[N(68,'add'),N(137.5,'search'),N(160,'menu')])}</div>
<div class="row views">${row(0,[T(7,61,'Assembly','color:#1f93cf'),[67,2,'<div style="height:18px;background:#777"></div>'],T(77,127.5,'Modeling')])}</div>
<div class="row root">${row(0,[N(3,'asm'),T(27,160,'gripperassemble.iam')])}</div>
<tree-item icon="folder" text="Relationships" w="75"></tree-item><tree-item icon="reps" text="Representations" w="92"></tree-item><tree-item icon="folder" text="Origin" w="34"></tree-item><tree-item icon="part" text="gripper1:1" w="59"></tree-item><tree-item icon="part" text="gripper2:1" w="59"></tree-item>`);

/* 3D scene: a free canvas, drawn in screen coordinates */
const wood=(id,f,seed,r,g,b)=>`<filter id="${id}" x="0" y="0" width="1" height="1" color-interpolation-filters="sRGB"><feTurbulence type="fractalNoise" baseFrequency="${f}" numOctaves="3" seed="${seed}"/><feColorMatrix values="${r[0]} 0 0 0 ${r[1]}  ${g[0]} ${g[2]||0} 0 0 ${g[1]}  ${b[0]} ${b[2]||0} 0 0 ${b[1]}  0 0 0 0 1"/><feComposite operator="in" in2="SourceGraphic"/></filter>`;
def('model-scene',`:host{width:1738px;height:795px;overflow:hidden;background:linear-gradient(#8292ae 0%,#8e9cb6 13%,#99a6bb 28%,#a0aabf 45%,#a0a9bd 56%,#9ba4b3 66%,#a2a8b3 73%,#afb3bc 81%,#bbbdc3 89%,#c5c6ca 100%);position:relative}
.shade{position:absolute;inset:0;background:linear-gradient(90deg,rgba(52,59,72,.96) 0%,rgba(56,64,79,.76) 5%,rgba(64,73,91,.52) 11%,rgba(76,87,108,.3) 18%,rgba(90,105,130,.13) 25%,rgba(100,120,150,.03) 32%,transparent 37%,transparent 63%,rgba(100,120,150,.03) 68%,rgba(90,105,130,.13) 75%,rgba(76,87,108,.3) 82%,rgba(64,73,91,.52) 89%,rgba(56,64,79,.76) 95%,rgba(52,59,72,.96) 100%);-webkit-mask:linear-gradient(#000 0%,rgba(0,0,0,.92) 25%,rgba(0,0,0,.8) 48%,rgba(0,0,0,.6) 62%,rgba(0,0,0,.36) 72%,rgba(0,0,0,.18) 82%,rgba(0,0,0,.08) 100%)}svg{position:absolute;inset:0}`,
`<div class="shade"></div><svg width="1738" height="795" viewBox="182 176 1738 795" font-family="Open Sans,sans-serif">
<defs>${wood('wl','.055 .03',4,[.26,.68],[.24,.45,.12],[.2,.3,.2])}${wood('wb','.05 .02',9,[.06,.568],[.06,.374],[.06,.26])}${wood('wd','.014 .05',2,[.14,.25],[.15,.18],[.16,.125])}
<linearGradient id="vf" x2="0" y2="1"><stop stop-color="#8c919b"/><stop offset="1" stop-color="#858992"/></linearGradient>
<linearGradient id="vr" x2="0" y2="1"><stop stop-color="#90949d"/><stop offset="1" stop-color="#747881"/></linearGradient>
<filter id="soft" x="-.3" y="-.5" width="1.6" height="2"><feGaussianBlur stdDeviation="3"/></filter></defs>
<g shape-rendering="crispEdges">
<path filter="url(#wl)" d="M1125 323H1315V413H1125Z"/><path filter="url(#wd)" d="M1125 413H1315V458H1290V448H1125Z"/>
<path filter="url(#wl)" d="M1297 458H1315L1311.500 727L1295.500 719Z"/><path fill="#5f4d42" d="M1295 719L1311 727V771L1295 763.500Z"/>
<path fill="#442b1f" d="M852 489H1297V500H852Z"/><path fill="#d2a583" d="M852 498L1297 499V503L852 501.500Z"/>
<path filter="url(#wd)" d="M852 501.500L1297 503V557L852 555Z"/>
<path filter="url(#wb)" d="M790 445L1297 447V492L853 490L851.500 716L788 760Z"/><path fill="#553829" d="M787 760L851 715.500V760L787 805Z"/></g>
<path d="M926 721H930V725H926Z" fill="#ffff22"/>
<path d="M234.500 908V920" stroke="#0a8f14" stroke-width="1.300"/><path d="M234.500 918V935" stroke="#a11" stroke-width="1.300"/><path d="M234.500 918.500H210" stroke="#00008c" stroke-width="1.300"/><path d="M234.500 896.500L240 904Q240 909 234.500 909Q229 909 229 904Z" fill="#089310"/><path d="M234.500 940L240 931Q238 928.500 234.500 928.500Q231 928.500 229 931Z" fill="#a80808"/><path d="M204 918.500L214 913V924Z" fill="#0b0b9c"/>
<text x="234.500" y="896.500" font-size="11.500" text-anchor="middle" fill="#35d53a">Y</text><text x="234.500" y="948" font-size="11.500" text-anchor="middle" fill="#e23b3b">X</text><text x="198.500" y="923" text-anchor="middle" font-size="12" fill="#2a2ad0">Z</text>
<path d="M1838 290H1884L1888 300H1834Z" fill="#20252f" opacity=".45" filter="url(#soft)"/>
<path d="M1835 228.500H1883L1886.500 261H1831.500Z" fill="url(#vf)"/><path d="M1831.500 261H1886.500L1883 296H1835.500Z" fill="url(#vr)"/><path d="M1831.500 261H1886.500" stroke="#656a75"/><path d="M1842 255H1876V269H1842Z" fill="#7d8497" opacity=".6"/>
<text x="1859.500" y="283.500" font-size="9.500" font-weight="700" text-anchor="middle" textLength="33" fill="#575b66">RIGHT</text><text transform="translate(1855 237) rotate(90)" font-size="11" font-weight="700" textLength="14" lengthAdjust="spacingAndGlyphs" fill="#61656f">TOP</text>
<rect x="1886.500" y="322" width="32.500" height="228" rx="3" fill="#7e838e" stroke="#3c4350" stroke-width="1.500"/>
<circle cx="1912" cy="328" r="3.800" fill="#565c68"/><path d="M1910.300 326.300L1913.700 329.700M1913.700 326.300L1910.300 329.700" stroke="#c8ccd3"/>
<path d="M1893 354Q1893 344 1903 344H1913V354Q1913 364 1903 364Q1893 364 1893 354Z" fill="#b9bec6" stroke="#646a76"/><circle cx="1903" cy="354" r="5.500" fill="#b0b5be" stroke="#646a76" stroke-width="1.300"/><path d="M1899 358L1896 361M1907 358L1910 361" stroke="#646a76"/>
<path d="M1900 375H1905L1902.500 378Z" fill="#4e5460"/><path d="M1890 382.500H1916" stroke="#5d636f"/>
<path d="M1898 410L1892 403Q1891 400 1894 401L1898 404L1896 393Q1898 390 1899.500 393L1901.500 400L1902 390.500Q1904 388.500 1905 390.500L1905.500 400L1908 392Q1910 390.500 1910.500 393L1909.500 401L1912 397Q1914 396.500 1913.500 399L1910 407L1908 411Z" fill="#c3c7cd" stroke="#5b616d"/>
<rect x="1891.500" y="421.500" width="16" height="16" fill="none" stroke="#555b67"/><circle cx="1907.500" cy="436.500" r="5" fill="#c9cfd6" stroke="#646a76"/><path d="M1911 440L1914.500 443.500" stroke="#c3c7cd" stroke-width="2.200"/>
<path d="M1900 453H1905L1902.500 456ZM1900 495H1905L1902.500 498Z" fill="#4e5460"/>
<ellipse cx="1903" cy="475" rx="3.500" ry="10" fill="none" stroke="#555b67" stroke-width="1.400"/><ellipse cx="1903" cy="475" rx="10.500" ry="4" fill="none" stroke="#555b67" stroke-width="1.400"/><path d="M1900 475H1906M1903 472V478M1906 468H1910V471" stroke="#555b67" fill="none"/>
<path d="M1892 512H1913V527H1892Z" fill="#b9bec6" stroke="#4f5561"/><path d="M1895 516H1910V523H1895Z" fill="#9fa5b0" stroke="#4f5561"/><path d="M1894 511L1899 506V510L1907 507V511Z" fill="#b9bec6" stroke="#5b616d"/>
<circle cx="1912" cy="543" r="3.800" fill="#565c68"/><path d="M1910 542H1914M1910.500 543.500H1913.500L1912 545.500Z" stroke="#c8ccd3" stroke-width=".8"/>
<path d="M1868.500 189H1879V191.500H1868.500Z" fill="#fff"/><path d="M1892 186V184H1897V190H1895M1889.500 186.500H1894.500V191.500H1889.500Z" fill="none" stroke="#fff" stroke-width="1.600"/><path d="M1910 184L1917.500 192M1917.500 184L1910 192" stroke="#fff" stroke-width="2.400"/></svg>`);

def('doc-tabs',`:host{height:30px;background:#5f5f5f;color:#d0d0d0}.row{height:30px}.act{background:#f5f5f5;color:#555;width:182px;height:30px;display:flex;align-items:center;gap:10px;padding-left:11px;box-sizing:border-box}`,
`<div class="row">${row(182,[N(187,'cascade'),N(217,'grid'),N(247,'rows'),N(277,'cols'),N(310.5,'up'),[332,1,'<div style="height:30px;background:#999"></div>'],T(343.5,408,'My Home'),T(432.5,509.5,'gripper2.ipt'),T(534,660,'body assembly.iam'),T(684.5,796,'linkassembly.iam'),T(820.5,897,'linksupp.ipt'),T(921.5,1035.5,'diskassembly.iam'),[1050,182,`<div class="act">${tx('gripperassemble.iam',136.5)}${ic('docx')}</div>`]])}</div>`);
def('status-bar',`:host{height:29px;background:#f5f5f5;color:#111}.row{height:29px}.v{height:29px;background:#d0d0d0}fit-label{margin-top:3px}`,
`<div class="row">${row(0,[T(0,117,'For Help, press F1'),[1842,1,'<div class="v"></div>'],T(1853,1861,'2'),[1882,1,'<div class="v"></div>'],T(1892,1907,'14')])}</div>`);
const app=(x,w,n,run,act)=>[x,w,`<div class="app ${run?'run':''} ${act?'on':''}">${ic(n)}</div>`];
def('task-bar',`:host{height:50px;background:linear-gradient(90deg,#080808 0,#0a0a0a 500px,#222 660px,#262626 720px,#141414 860px,#0d0d0d 1300px,#070707 1400px,#121212 1550px,#0e0e0e 1920px);color:#fff}.row{height:50px}.find{width:430px;height:50px;box-sizing:border-box;background:#f1f1f1;border-top:1px solid #b5b5b5;color:#3a3a3a;font-size:18px}.find fit-label{margin-top:-1px}.app{height:50px;display:flex;align-items:center;justify-content:center;box-sizing:border-box;padding-top:1px}.app.run{border-bottom:3px solid #76b9ed;padding-top:2px}.on{background:#3b3b3b}.clock{display:flex;flex-direction:column;gap:3px;align-items:center;margin-top:-1px}`,
`<div class="row">${row(0,[N(20,'win'),[60,430,`<div class="find row">${row(60,[N(71,'cortana'),T(110.5,262.5,'Type here to search'),N(456.5,'mic')])}</div>`],N(509,'taskview'),
app(559,50,'edge'),app(621,50,'explorer'),app(683,50,'mail'),app(745,50,'share'),app(807,50,'pdf'),app(868,51,'chrome',1),app(930.5,50,'kmp'),app(993,50,'vlc'),app(1054,50,'store'),app(1116,50,'note'),app(1178.5,50,'steam',1),app(1240.5,50,'ppt',1),app(1298,60,'inv',1,1),app(1364.5,50,'paint',1),
N(1558.5,'people'),N(1603.5,'caret'),N(1633,'battery'),N(1661.5,'vol'),N(1692,'wifi'),T(1725,1754,'ENG'),[1770,76,`<div class="clock">${tx('13:20',35)}${tx('19-03-2019',76)}</div>`],N(1869,'action'),[1914,1,'<div style="height:50px;background:#555"></div>']])}</div>`);
def('inventor-desktop',`:host{width:1920px;height:1080px;overflow:hidden;background:#fff}.mid{display:flex}.main{flex:none;width:1738px}`,
`<title-bar></title-bar><ribbon-tabs></ribbon-tabs><ribbon-bar></ribbon-bar><div class="mid"><browser-panel></browser-panel><div class="main"><model-scene></model-scene><doc-tabs></doc-tabs></div></div><status-bar></status-bar><task-bar></task-bar>`);
</script></body></html>
